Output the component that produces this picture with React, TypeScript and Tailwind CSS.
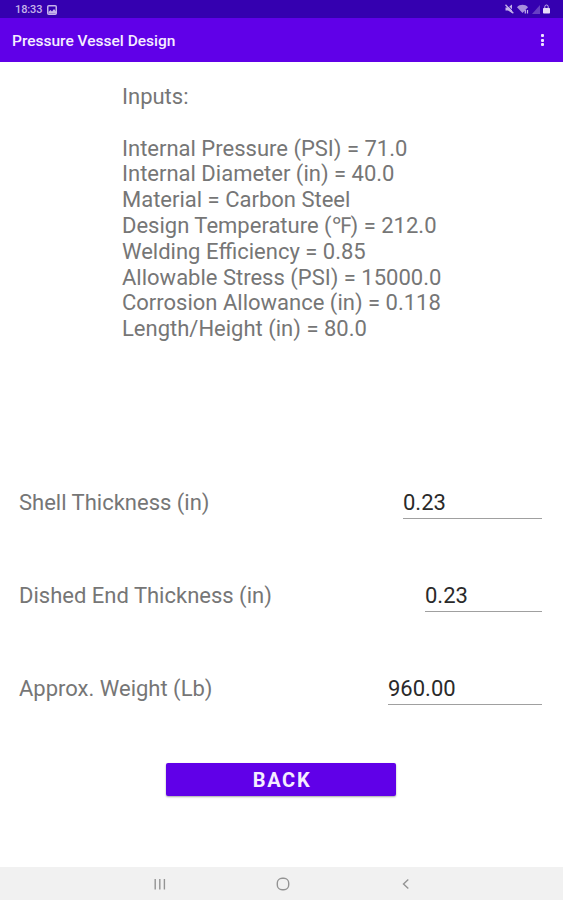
const inputs = [
  "Internal Pressure (PSI) = 71.0",
  "Internal Diameter (in) = 40.0",
  "Material = Carbon Steel",
  "Design Temperature (℉) = 212.0",
  "Welding Efficiency = 0.85",
  "Allowable Stress (PSI) = 15000.0",
  "Corrosion Allowance (in) = 0.118",
  "Length/Height (in) = 80.0",
];

const results = [
  { label: "Shell Thickness (in)", value: "0.23", width: "w-[139px]" },
  { label: "Dished End Thickness (in)", value: "0.23", width: "w-[117px]" },
  { label: "Approx. Weight (Lb)", value: "960.00", width: "w-[154px]" },
];

function StatusBar() {
  return (
    <div className="flex h-[18px] items-center bg-[#3500b0] pl-[15px] pr-[13px] text-[#c5b3ea]">
      <span className="pt-px text-[11px] font-medium leading-[17px] tracking-[-0.1px]">18:33</span>
      <svg className="ml-[5px] mt-px" width="10" height="10" viewBox="0 0 10 10">
        <rect x="0.75" y="0.75" width="8.5" height="8.5" rx="1" fill="none" stroke="currentColor" strokeWidth="1.5" />
        <path d="M1.5 8.5V7l2-2 1.5 1.5L7 4l2 2.5v2z" fill="currentColor" />
      </svg>
      <div className="ml-auto flex items-center gap-[3px]">
        <svg width="9" height="10" viewBox="0 0 9 10">
          <path d="M0.5 3.5H3L7 0.5v8.5L3 6.5H0.5z" fill="currentColor" />
          <path d="M1.8 0.3L9 8" stroke="#3500b0" strokeWidth="1" />
          <path d="M0.5 0.8L8.3 9.3" stroke="currentColor" strokeWidth="1.3" />
        </svg>
        <svg width="12" height="10" viewBox="0 0 12 10">
          <path d="M0 3.2C3 0 8 0 11 3.2L5.5 9z" fill="currentColor" opacity="0.8" />
          <path d="M8.3 9.5V6M10.5 6v3.5" stroke="currentColor" strokeWidth="1.2" />
        </svg>
        <svg width="8" height="9" viewBox="0 0 8 9">
          <path d="M0 9L8 0v9z" fill="currentColor" opacity="0.35" />
        </svg>
        <svg width="7" height="10" viewBox="0 0 7 10">
          <path d="M1.8 5V2.7a1.7 1.7 0 0 1 3.4 0V5" fill="none" stroke="currentColor" />
          <rect y="4" width="7" height="5.5" rx="0.8" fill="#e6dcf8" />
        </svg>
      </div>
    </div>
  );
}

function AppBar() {
  return (
    <header className="flex h-11 items-center justify-between bg-[#6000e8] pl-3 pr-[19px]">
      <h1 className="pt-[3px] text-[15.5px] font-medium text-[#f5edff]">Pressure Vessel Design</h1>
      <button aria-label="More options" className="flex flex-col gap-[1.5px]">
        <span className="size-[3px] rounded-[1px] bg-[#efe3ff]" />
        <span className="size-[3px] rounded-[1px] bg-[#efe3ff]" />
        <span className="size-[3px] rounded-[1px] bg-[#efe3ff]" />
      </button>
    </header>
  );
}

function NavBar() {
  return (
    <nav className="flex h-[33px] items-center bg-[#f1f1f1] pl-[154px] text-[#949494]">
      <svg width="12" height="12" viewBox="0 0 12 12" stroke="currentColor" strokeWidth="1.4">
        <path d="M1.2 1v10.5M5.8 1v10.5M10.4 1v10.5" />
      </svg>
      <svg className="ml-[110px]" width="14" height="14" viewBox="0 0 14 14" fill="none" stroke="currentColor" strokeWidth="1.4">
        <rect x="1.3" y="1.3" width="11.4" height="11.4" rx="4.8" />
      </svg>
      <svg className="ml-[112px]" width="8" height="12" viewBox="0 0 8 12" fill="none" stroke="currentColor" strokeWidth="1.4">
        <path d="M6.3 1.5L1.5 6l4.8 4.5" />
      </svg>
    </nav>
  );
}

export default function App() {
  return (
    <div className="flex h-[900px] w-[563px] flex-col bg-white font-['Roboto',sans-serif]">
      <StatusBar />
      <AppBar />
      <main className="flex flex-1 flex-col">
        <div className="ml-[122px] mt-[22px] h-[373px] text-[22px] leading-[25.8px] text-[#767676]">
          <p>Inputs:</p>
          <div className="mt-[25.8px]">
            {inputs.map((line) => (
              <p key={line} className="whitespace-nowrap">{line}</p>
            ))}
          </div>
        </div>

        <div className="flex flex-col gap-[57px] pl-[19px] pr-[21px] pt-[26px]">
          {results.map((row) => (
            <div key={row.label} className="flex h-9 justify-between text-[22px] leading-[40px]">
              <span className="text-[#767676]">{row.label}</span>
              <input
                defaultValue={row.value}
                className={`h-9 border-b border-[#a0a0a0] pt-1 text-[#2a2a2a] outline-none ${row.width}`}
              />
            </div>
          ))}
        </div>

        <button className="ml-[166px] mt-[58px] h-[33px] w-[230px] rounded-[2px] bg-[#6000e8] pl-[2px] pt-px text-[20px] font-bold leading-[32px] tracking-[1.7px] text-[#f5edff] shadow-[0_1px_2px_rgba(0,0,0,0.35)]">
          BACK
        </button>
      </main>
      <NavBar />
    </div>
  );
}
